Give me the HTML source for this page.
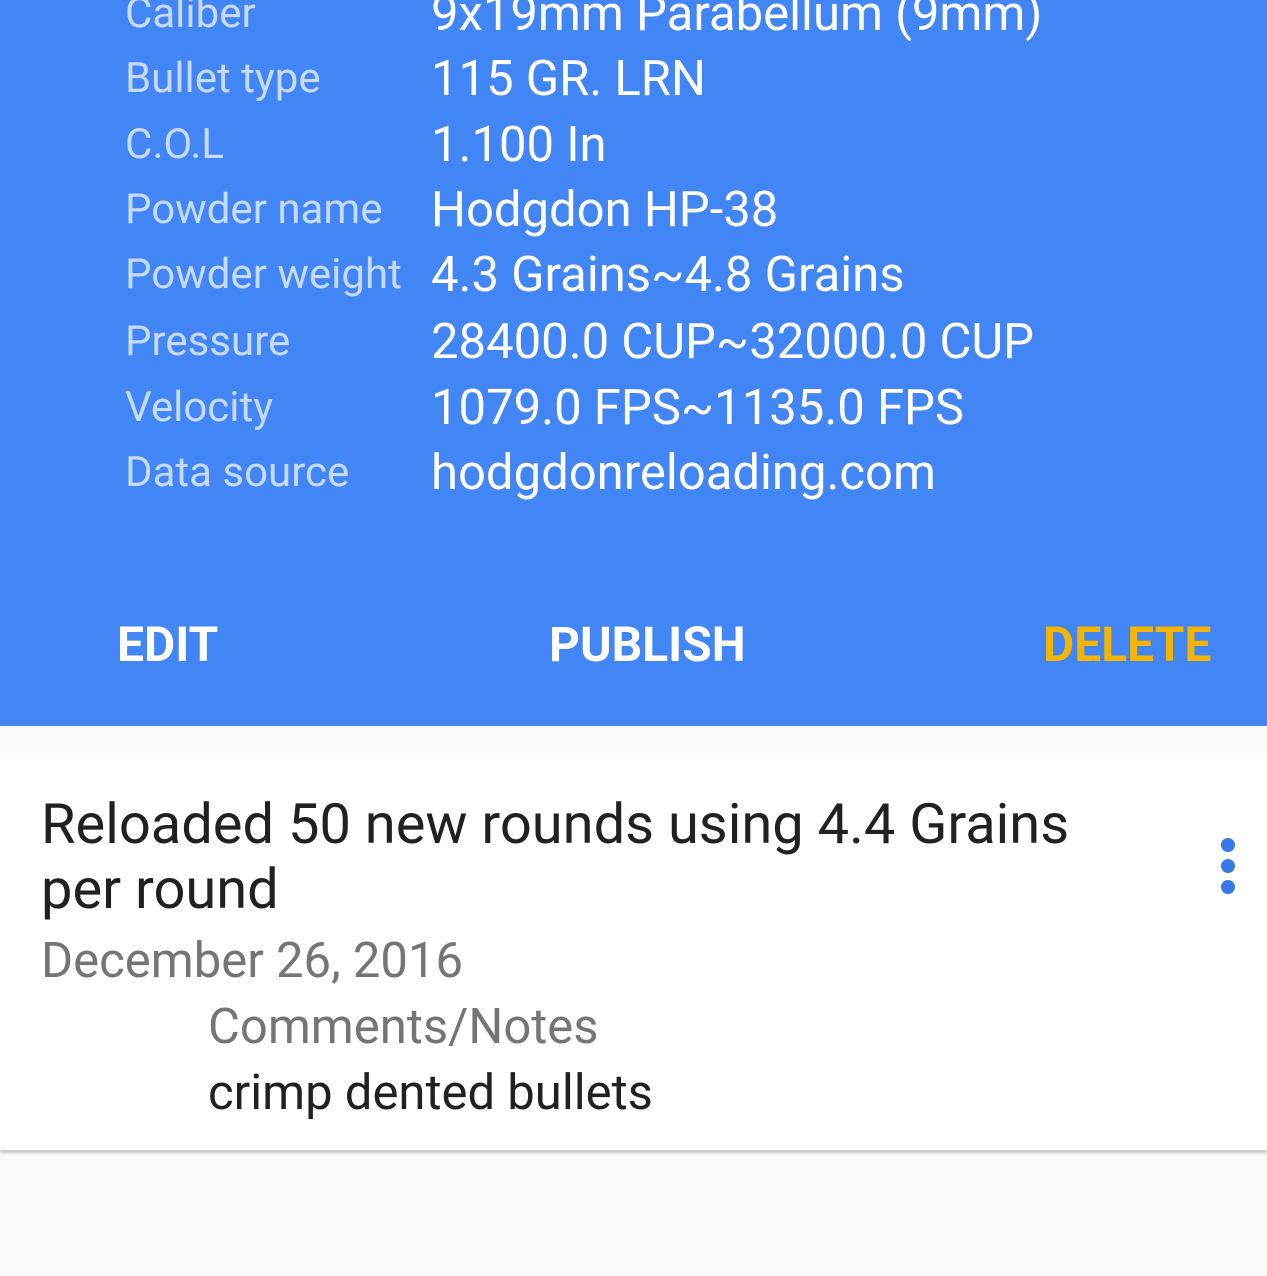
<!DOCTYPE html>
<html><head><style>
body{margin:0;width:1267px;height:1276px;background:#fafafa;position:relative;overflow:hidden;font-family:"Roboto","Liberation Sans",sans-serif}
.blue{position:absolute;left:0;top:0;width:1267px;height:726px;background:#4285f4}
.t{position:absolute;white-space:nowrap;line-height:1}
.l{left:125px;font-size:42px;color:#c6dafc}
.v{left:431px;font-size:49px;color:#fff}
.b{font-size:48px;font-weight:bold;color:#fff;top:621px}
.card{position:absolute;left:0;top:753px;width:1267px;height:397px;background:#fff;box-shadow:0 3px 3px rgba(0,0,0,.2)}
.dot{position:absolute;left:1221px;width:14px;height:14px;border-radius:50%;background:#3b78e7}
</style></head><body>
<div class="blue"></div>
<div class="t l" style="top:-7px">Caliber</div><div class="t v" style="top:-11px">9x19mm Parabellum (9mm)</div>
<div class="t l" style="top:58px">Bullet type</div><div class="t v" style="top:54px">115 GR. LRN</div>
<div class="t l" style="top:124px">C.O.L</div><div class="t v" style="top:120px">1.100 In</div>
<div class="t l" style="top:189px">Powder name</div><div class="t v" style="top:185px">Hodgdon HP-38</div>
<div class="t l" style="top:254px">Powder weight</div><div class="t v" style="top:250px">4.3 Grains~4.8 Grains</div>
<div class="t l" style="top:321px">Pressure</div><div class="t v" style="top:317px">28400.0 CUP~32000.0 CUP</div>
<div class="t l" style="top:387px">Velocity</div><div class="t v" style="top:383px">1079.0 FPS~1135.0 FPS</div>
<div class="t l" style="top:452px">Data source</div><div class="t v" style="top:448px">hodgdonreloading.com</div>
<div class="t b" style="left:117px">EDIT</div>
<div class="t b" style="left:549px">PUBLISH</div>
<div class="t b" style="left:1043px;color:#f4b400">DELETE</div>
<div class="card"></div>
<div class="t" style="left:41px;top:792px;font-size:56px;color:#212121;line-height:65px;width:1100px;white-space:normal">Reloaded 50 new rounds using 4.4 Grains per round</div>
<div class="t" style="left:41px;top:936px;font-size:49px;color:#757575">December 26, 2016</div>
<div class="t" style="left:208px;top:1002px;font-size:49px;color:#757575">Comments/Notes</div>
<div class="t" style="left:208px;top:1068px;font-size:49px;color:#212121">crimp dented bullets</div>
<div class="dot" style="top:838px"></div><div class="dot" style="top:859px"></div><div class="dot" style="top:880px"></div>
</body></html>
